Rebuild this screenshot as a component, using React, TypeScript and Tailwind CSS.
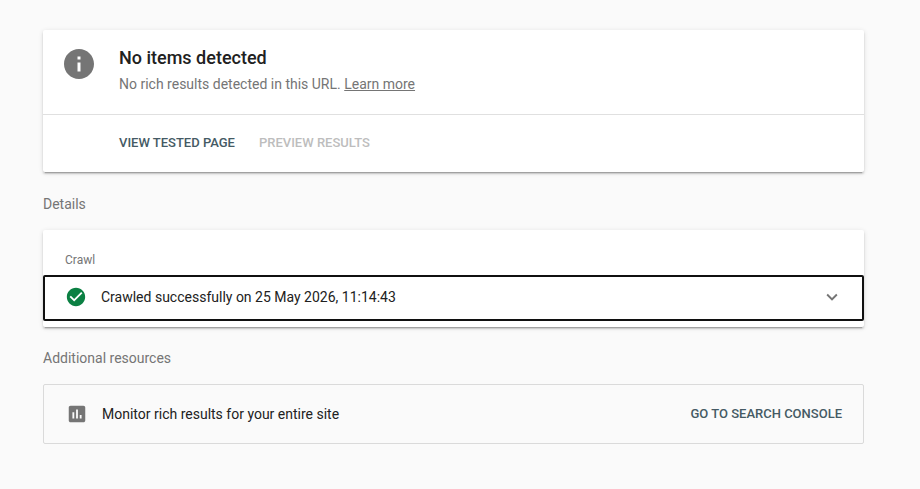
import { useState } from "react";

function InfoIcon() {
  return (
    <svg viewBox="0 0 24 24" className="size-9" fill="currentColor" aria-hidden="true">
      <path d="M12 2C6.48 2 2 6.48 2 12s4.48 10 10 10 10-4.48 10-10S17.52 2 12 2zm1 15h-2v-6h2v6zm0-8h-2V7h2v2z" />
    </svg>
  );
}

function CheckCircleIcon() {
  return (
    <svg viewBox="0 0 24 24" className="size-[22px]" fill="currentColor" aria-hidden="true">
      <path d="M12 2C6.48 2 2 6.48 2 12s4.48 10 10 10 10-4.48 10-10S17.52 2 12 2zm-2 15l-5-5 1.41-1.41L10 14.17l7.59-7.59L19 8l-9 9z" />
    </svg>
  );
}

function ChevronIcon({ open }: { open: boolean }) {
  return (
    <svg
      viewBox="0 0 24 24"
      className={open ? "size-[22px] rotate-180" : "size-[22px]"}
      fill="currentColor"
      aria-hidden="true"
    >
      <path d="M7.41 8.59L12 13.17l4.59-4.58L18 10l-6 6-6-6 1.41-1.41z" />
    </svg>
  );
}

function ChartIcon() {
  return (
    <svg viewBox="0 0 24 24" className="size-[22px]" fill="currentColor" aria-hidden="true">
      <path d="M19 3H5c-1.1 0-2 .9-2 2v14c0 1.1.9 2 2 2h14c1.1 0 2-.9 2-2V5c0-1.1-.9-2-2-2zM9 17H7v-7h2v7zm4 0h-2V7h2v10zm4 0h-2v-4h2v4z" />
    </svg>
  );
}

const cardClass =
  "rounded-xs bg-white shadow-[0_2px_2px_0_rgba(0,0,0,0.14),0_3px_1px_-2px_rgba(0,0,0,0.2),0_1px_5px_0_rgba(0,0,0,0.12)]";

const headingClass = "text-sm leading-5 text-[#757575]";

export default function App() {
  const [open, setOpen] = useState(false);

  return (
    <main className="min-h-screen bg-[#fafafa] pt-[30px] pr-14 pb-11 pl-[43px] font-['Roboto',sans-serif] text-sm text-[#212121]">
      <section className={cardClass}>
        <div className="flex gap-[22px] border-b border-[#e0e0e0] pt-4 pb-5 pl-[18px]">
          <div className="shrink-0 text-[#757575]">
            <InfoIcon />
          </div>
          <div>
            <h1 className="text-lg leading-6 font-medium">No items detected</h1>
            <p className="mt-1 text-sm leading-5 text-[#757575]">
              No rich results detected in this URL.{" "}
              <a href="#learn-more" className="underline">
                Learn more
              </a>
            </p>
          </div>
        </div>
        <div className="flex gap-6 pt-[18px] pb-[19px] pl-[76px] text-[13px] leading-5 font-medium">
          <button type="button" className="uppercase text-[#455a64]">
            View tested page
          </button>
          <button type="button" disabled className="uppercase text-[#bdbdbd]">
            Preview results
          </button>
        </div>
      </section>

      <h2 className={`mt-[22px] ${headingClass}`}>Details</h2>

      <section className={`mt-4 pt-[22px] pb-1.5 ${cardClass}`}>
        <h3 className="pl-[22px] text-xs leading-4 text-[#757575]">Crawl</h3>
        <button
          type="button"
          aria-expanded={open}
          onClick={() => setOpen(!open)}
          className="mt-[7px] flex h-[46px] w-full items-center rounded-xs border-2 border-[#101010] pr-[19px] pb-0.5 pl-5 text-left"
        >
          <span className="text-[#0b8043]">
            <CheckCircleIcon />
          </span>
          <span className="ml-3.5 flex-1">Crawled successfully on 25 May 2026, 11:14:43</span>
          <span className="text-[#757575]">
            <ChevronIcon open={open} />
          </span>
        </button>
      </section>

      <h2 className={`mt-[21px] ${headingClass}`}>Additional resources</h2>

      <section className="mt-4 flex h-[60px] items-center rounded-xs border border-[#dadada] pr-[21px] pl-[22px]">
        <span className="text-[#757575]">
          <ChartIcon />
        </span>
        <p className="ml-3.5 flex-1">Monitor rich results for your entire site</p>
        <a href="#search-console" className="text-[13px] leading-5 font-medium text-[#455a64] uppercase">
          Go to Search Console
        </a>
      </section>
    </main>
  );
}
